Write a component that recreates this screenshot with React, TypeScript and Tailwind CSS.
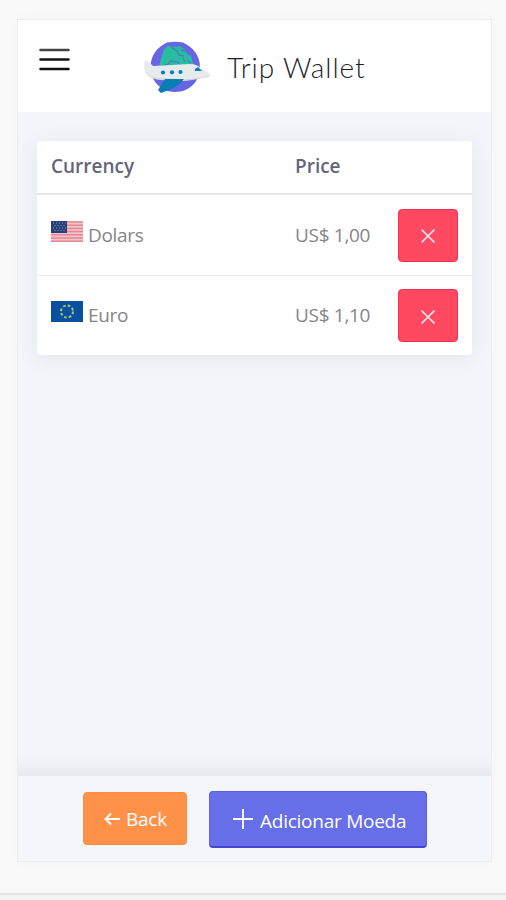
import { useState } from "react";

type Currency = {
  code: "usd" | "eur";
  name: string;
  price: string;
};

const initialCurrencies: Currency[] = [
  { code: "usd", name: "Dolars", price: "US$ 1,00" },
  { code: "eur", name: "Euro", price: "US$ 1,10" },
];

function TripLogo() {
  return (
    <svg viewBox="0 0 68 52" className="h-[52px] w-[68px]" aria-hidden="true">
      <path
        d="M23 1.500Q31 0 39 1.500C49 6 56 15 56 26C56 40 46 51 31 51C17 51 6.500 40 6.500 26C6.500 15 13 6 23 1.500Z"
        fill="#6765e4"
      />
      <path d="M20 8l4-3 6 1 6-1 5 4 2 4 4 2 2 7v4l-35 3 3-11z" fill="#27bd9e" />
      <path
        d="M27 6l6 4 2 4 5 1M37 9l4 1M43 19l4 3M18 25l6-2 3-3 7 1 3 5M39 17l2 4"
        fill="none"
        stroke="#477ec4"
        strokeWidth="1.300"
      />
      <path
        d="M.5 20Q3 18 5 21L9 25L46 23Q53 23 58 28L65 32Q69 35 64 36C53 37 48 39 36 39L16 38C7 37 0 32 0 26Z"
        fill="#e8ebee"
      />
      <path
        d="M1 30Q6 37 16 37L36 38C48 39 54 37 66 34L64 36C53 38 46 40 36 40L16 39C7 38 2 34 1 30Z"
        fill="#d5d9e1"
      />
      <path d="M21 38h19c-4 5-9 9-15 11l-8 3-3-3z" fill="#087eb5" />
      <path d="M51 28l3-2 4 4h-6q-2 0-1-2z" fill="#087eb5" />
      <circle cx="19" cy="31.500" r="2.100" fill="#087eb5" />
      <circle cx="28" cy="31.300" r="2.100" fill="#087eb5" />
      <circle cx="36.500" cy="31" r="2.100" fill="#087eb5" />
    </svg>
  );
}

function UsFlag() {
  return (
    <svg viewBox="0 0 32 21" className="h-[21px] w-8" aria-hidden="true">
      <path d="M0 0h32v21H0z" fill="#f2c3c8" />
      <path
        d="M0 1h32M0 4.200h32M0 7.400h32M0 10.600h32M0 13.800h32M0 17h32M0 20.200h32"
        stroke="#e48792"
        strokeWidth="1.500"
      />
      <path d="M0 0h16v12H0z" fill="#263f78" />
      <path
        d="M2 2h13M3.500 4.500h12M2 7h13M3.500 9.500h12"
        stroke="#8fa2c4"
        strokeWidth="1"
        strokeDasharray="1 2"
      />
    </svg>
  );
}

function EuFlag() {
  return (
    <svg viewBox="0 0 32 21" className="h-[21px] w-8" aria-hidden="true">
      <path d="M0 0h32v21H0z" fill="#0750a0" />
      <circle
        cx="16"
        cy="10.500"
        r="6"
        fill="none"
        stroke="#b3bf70"
        strokeWidth="2"
        strokeDasharray="2.700 2.012"
      />
    </svg>
  );
}

export default function App() {
  const [currencies, setCurrencies] = useState(initialCurrencies);

  const handleRemove = (code: Currency["code"]) => {
    setCurrencies((current) => current.filter((item) => item.code !== code));
  };

  return (
    <div className="flex h-[900px] w-full flex-col bg-[#f9f9f9] pt-[19px] font-['Open_Sans','Noto_Sans',sans-serif]">
      <div className="ml-[17px] flex h-[843px] w-[475px] flex-col border border-[#ededf0] bg-[#f3f5fa] shadow-[0_0_16px_rgba(0,0,0,0.025)]">
        <header className="flex h-[92px] shrink-0 items-start bg-white pl-[21px]">
          <button type="button" aria-label="Menu" className="mt-7 w-[31px]">
            <svg viewBox="0 0 31 24" className="h-6 w-[31px]" fill="none" strokeLinecap="round" strokeWidth="2.500">
              <path d="M1.500 2h28" stroke="#444" />
              <path d="M1.500 11.500h28M1.500 21h28" stroke="#111" />
            </svg>
          </button>
          <div className="mt-[21px] ml-[74px] flex">
            <TripLogo />
            <h1 className="mt-[6px] ml-[15px] font-['Lato',sans-serif] text-[28px] leading-10 font-light tracking-[0.9px] whitespace-nowrap text-[#1c1c28]">
              Trip Wallet
            </h1>
          </div>
        </header>

        <main className="min-h-0 flex-1 px-[19px] pt-[29px]">
          <div className="w-[435px] rounded-[4px] bg-white shadow-[0_3px_22px_rgba(60,60,110,0.08)]">
            <div className="grid h-[54px] grid-cols-[244px_1fr] border-b-2 border-[#e5e7eb] pl-[14px] text-[19px] leading-[51px] font-semibold text-[#65657a]">
              <span>Currency</span>
              <span>Price</span>
            </div>
            {currencies.map((currency) => (
              <div
                key={currency.code}
                className="grid h-[81px] grid-cols-[244px_103px_60px] items-center border-b border-[#e8eaed] pl-[14px] text-[19px] tracking-[-0.3px] text-[#858589] last:h-[79px] last:border-b-0"
              >
                <div className="flex items-center gap-[5px]">
                  <span className="-mt-2">
                    {currency.code === "usd" ? <UsFlag /> : <EuFlag />}
                  </span>
                  <span>{currency.name}</span>
                </div>
                <span className="whitespace-nowrap">{currency.price}</span>
                <button
                  type="button"
                  aria-label={`Remove ${currency.name}`}
                  onClick={() => handleRemove(currency.code)}
                  className="flex h-[53px] w-[60px] items-center justify-center rounded-[4px] border border-[#f23156] bg-[#ff4961]"
                >
                  <svg viewBox="0 0 16 16" className="mt-0.5 size-4" fill="none" stroke="#ffe9ed" strokeWidth="1.700">
                    <path d="M1.500 1.500l13 13M14.500 1.500l-13 13" />
                  </svg>
                </button>
              </div>
            ))}
          </div>
        </main>

        <div className="h-5 shrink-0 bg-linear-to-b from-[#f3f5fa] to-[#e8e9ee]" />
        <footer className="flex h-[85px] shrink-0 items-start bg-[#f3f6fa] pt-[15px] pl-[65px] text-[19px] tracking-[-0.25px] text-white">
          <button
            type="button"
            className="mt-px flex h-[53px] w-[104px] items-center rounded-[4px] border border-[#ff8b3d] bg-[#ff9149] pt-0.5 pl-[20px]"
          >
            <svg viewBox="0 0 16 14" className="mr-[6px] mb-0.5 h-[14px] w-4" fill="none" stroke="currentColor" strokeWidth="1.900">
              <path d="M16 7H1.500M7 1.500L1.500 7L7 12.500" />
            </svg>
            <span>Back</span>
          </button>
          <button
            type="button"
            className="ml-[22px] flex h-[57px] w-[218px] items-center rounded-[4px] border border-b-2 border-[#605fe1] border-b-[#4642cf] bg-[#666ee8] pl-[23px] whitespace-nowrap"
          >
            <svg viewBox="0 0 20 20" className="mr-[7px] mb-px size-5" fill="none" stroke="currentColor" strokeWidth="1.800">
              <path d="M0 10h20M10 0v20" />
            </svg>
            <span className="mt-1">Adicionar Moeda</span>
          </button>
        </footer>
      </div>
      <div className="mt-[31px] h-[7px] border-t-2 border-[#e4e4e4] bg-[#f3f3f3]" />
    </div>
  );
}
